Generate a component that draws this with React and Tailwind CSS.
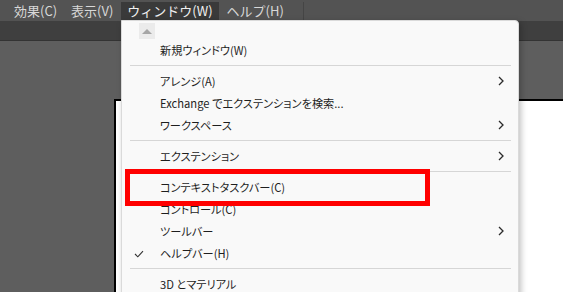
import React from 'react';

const font = { fontFamily: '"Noto Sans CJK JP", "Noto Sans", sans-serif' };

const menuBar = ['効果(C)', '表示(V)', 'ウィンドウ(W)', 'ヘルプ(H)'];

const groups = [
    [{ label: '新規ウィンドウ(W)' }],
    [
        { label: 'アレンジ(A)', sub: true },
        { label: 'Exchange でエクステンションを検索...' },
        { label: 'ワークスペース', sub: true },
    ],
    [{ label: 'エクステンション', sub: true }],
    [
        { label: 'コンテキストタスクバー(C)' },
        { label: 'コントロール(C)' },
        { label: 'ツールバー', sub: true },
        { label: 'ヘルプバー(H)', checked: true },
    ],
    [{ label: '3D とマテリアル' }],
];

const Chevron = () => (
    <svg width="6" height="10" viewBox="0 0 6 10" fill="none">
        <path d="M1 1L5 5L1 9" stroke="#2b2b2b" strokeWidth="1.3" />
    </svg>
);

const Check = () => (
    <svg width="10" height="8" viewBox="0 0 10 8" fill="none">
        <path d="M1 4L3.8 6.8L9 1.2" stroke="#333" strokeWidth="1.1" />
    </svg>
);

const MenuItem = ({ item }) => (
    <div className="relative flex h-[22px] items-center pl-[38px] pr-[14px] text-[11.2px] text-[#1e1e1e] [font-feature-settings:'palt']">
        {item.checked && (
            <span className="absolute left-[12px] top-[8px]">
                <Check />
            </span>
        )}
        <span className="flex-1 whitespace-nowrap">{item.label}</span>
        {item.sub && <Chevron />}
    </div>
);

const App = () => {
    return (
        <div className="relative h-[292px] w-[563px] overflow-hidden bg-[#5e5e5e]" style={font}>
            {/* menu bar */}
            <div className="flex h-[21px] items-center bg-[#535353] pl-[8px] text-[13px] text-[#d8d8d8]">
                {menuBar.map((m, i) => (
                    <div
                        key={m}
                        className={`flex h-[18px] items-center px-[6px] mr-[2px] ${i === 2 ? 'bg-[#3a3a3a] text-[#f0f0f0]' : ''}`}
                    >
                        {m}
                    </div>
                ))}
                <div className="ml-[11px] h-[18px] w-px bg-[#454545]" />
            </div>

            {/* control band */}
            <div className="h-[20px] border-b border-[#333333] bg-[#3f3f3f]" />

            {/* work area */}
            <div className="pl-[114px] pt-[58px]">
                <div className="h-[200px] border-l-2 border-t-2 border-black bg-white" />
            </div>

            {/* dropdown */}
            <div className="absolute left-[121px] top-[20px] w-[398px] h-[290px] rounded-tr-[4px] border border-[#dadada] bg-[#f9f9f9] shadow-[2px_2px_6px_rgba(0,0,0,0.25)]">
                <div className="pl-[17px] pt-[2px]">
                    <div className="flex h-[16px] w-[16px] items-center justify-center bg-[#ebebeb]">
                        <div className="h-0 w-0 border-x-[5px] border-b-[5px] border-x-transparent border-b-[#a6a6a6]" />
                    </div>
                </div>
                {groups.map((g, gi) => (
                    <div key={gi}>
                        {gi > 0 && (
                            <div className="py-[4px] pl-[8px] pr-[7px]">
                                <div className="h-px bg-[#d6d6d6]" />
                            </div>
                        )}
                        {g.map((item) => (
                            <MenuItem key={item.label} item={item} />
                        ))}
                    </div>
                ))}
            </div>

            {/* highlight box */}
            <div className="absolute left-[125px] top-[169px] h-[37px] w-[305px] border-[5px] border-[#ff0000]" />
        </div>
    );
};

export default App;
